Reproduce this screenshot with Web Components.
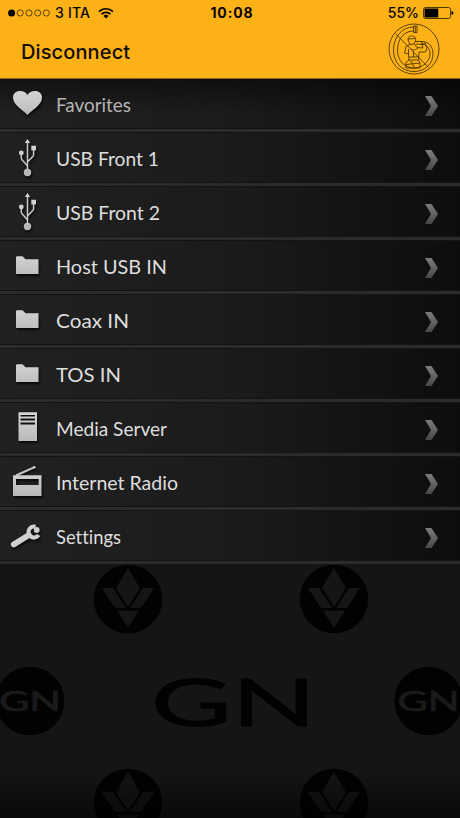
<!DOCTYPE html>
<html lang="en">
<head>
<meta charset="utf-8">
<meta name="viewport" content="width=device-width, initial-scale=1">
<title>Inputs</title>
<style>
  body {
    margin: 0;
    background: #151515;
  }
</style>
</head>
<body>
<player-screen>
  <status-bar slot="top" carrier="3 ITA" time="10:08" battery="55"></status-bar>
  <nav-bar slot="top">Disconnect</nav-bar>
  <source-row icon="heart" span="75" dim>Favorites</source-row>
  <source-row icon="usb" span="103">USB Front 1</source-row>
  <source-row icon="usb" span="104">USB Front 2</source-row>
  <source-row icon="folder" span="111">Host USB IN</source-row>
  <source-row icon="folder" span="73">Coax IN</source-row>
  <source-row icon="folder" span="65">TOS IN</source-row>
  <source-row icon="server" span="111">Media Server</source-row>
  <source-row icon="radio" span="122">Internet Radio</source-row>
  <source-row icon="wrench" span="65">Settings</source-row>
  <brand-pattern slot="bottom"></brand-pattern>
</player-screen>

<script>
// 54x51 drawings, one for each kind of source
const ICONS = {
  heart: '<path d="M27.500 37C23 32 13 27 13 19.500C13 15.500 16 13 20 13C23.500 13 26 14.500 27.500 17C29 14.500 31.500 13 35 13C39 13 42 15.500 42 19.500C42 27 32 32 27.500 37Z"/>',
  usb: `<circle cx="27.500" cy="40.500" r="3.700"/><circle cx="21.300" cy="21" r="2.400"/>
    <path d="M27.500 7L30.200 11H24.800ZM31.300 13.800H36V18.500H31.300Z"/>
    <path class="line" d="M27.500 10V38M21.300 21V26Q21.300 27 22.200 28L27.500 34M33.600 17V22.500Q33.600 23.500 32.800 24.400L27.500 30"/>`,
  folder: '<path d="M16 17.300Q16 16.300 17 16.300H22.500L25.500 19.300H38.500V34H16Z"/>',
  server: '<path fill-rule="evenodd" d="M18.500 10.300H37V39H18.500ZM20.500 13H35V14.600H20.500ZM20.500 16.600H35V18.400H20.500ZM20.500 20.600H35V22.400H20.500Z"/>',
  radio: '<path fill-rule="evenodd" d="M13 19.300H41.500V40H13ZM16 23V29H38.700V23Z"/><path class="line wide" d="M16 19.500L34 11.300"/><circle cx="34.300" cy="11.300" r="1.200"/>',
  wrench: `<path class="handle" d="M13.700 34.500L29 25"/>
    <path class="jaw" d="M35.500 16.700A5.500 5.500 0 1 0 38.600 25"/>
    <circle cx="36.700" cy="20" r="2.900"/>`
};

class PlayerScreen extends HTMLElement {
  constructor() {
    super();
    this.attachShadow({ mode: 'open' }).innerHTML = `
      <style>
        :host {
          display: flex;
          flex-direction: column;
          height: 818px;
          overflow: hidden;
          background: #151515;
        }
        header {
          height: 79px;
          box-sizing: border-box;
          background: #fcb116;
          border-bottom: 1px solid #8f6417;
        }
        main {
          display: flex;
          flex-direction: column;
          margin-top: -1px;
        }
        header { position: relative; }
      </style>
      <header><slot name="top"></slot></header>
      <main><slot></slot></main>
      <slot name="bottom"></slot>
    `;
  }
}

class StatusBar extends HTMLElement {
  connectedCallback() {
    const battery = Number(this.getAttribute('battery'));
    this.attachShadow({ mode: 'open' }).innerHTML = `
      <style>
        :host {
          display: grid;
          grid-template-columns: 1fr auto 1fr;
          align-items: center;
          height: 26px;
          padding: 0 6px 0 8px;
          color: #080500;
          font: 500 14px/26px Inter, sans-serif;
        }
        div { display: flex; align-items: center; }
        .right { justify-content: flex-end; gap: 4px; }
        .carrier { margin: 0 8px 0 5px; letter-spacing: 0.2px; }
        .time { font-weight: 700; letter-spacing: 0.9px; padding-left: 2px; }
        svg { display: block; }
      </style>
      <div>
        <svg width="42" height="8" viewBox="0 0 42 8">
          <circle cx="3.600" cy="4" r="3.500"/>
          <g fill="none" stroke="#3b2a08" stroke-width=".8">
            <circle cx="12.200" cy="4" r="3.100"/><circle cx="21" cy="4" r="3.100"/>
            <circle cx="29.700" cy="4" r="3.100"/><circle cx="38.300" cy="4" r="3.100"/>
          </g>
        </svg>
        <span class="carrier">${this.getAttribute('carrier')}</span>
        <svg width="16" height="12" viewBox="0 0 16 12" fill="none" stroke="#080500" stroke-width="1.700">
          <path d="M1 4.600A10 10 0 0 1 15 4.600M3.500 7.200A6.500 6.500 0 0 1 12.500 7.200"/>
          <path d="M5.400 9A3.800 3.800 0 0 1 10.600 9L8 11.600Z" fill="#080500" stroke="none"/>
        </svg>
      </div>
      <span class="time">${this.getAttribute('time')}</span>
      <div class="right">
        <span>${battery}%</span>
        <svg width="31" height="12" viewBox="0 0 31 12">
          <rect x=".5" y=".5" width="27" height="11" rx="2" fill="none" stroke="#3b2a08" stroke-width=".9"/>
          <rect x="1.500" y="1.500" width="${25 * battery / 100}" height="9"/>
          <path d="M28.500 4Q30.500 4.500 30.500 6T28.500 8Z"/>
        </svg>
      </div>
    `;
  }
}

class NavBar extends HTMLElement {
  constructor() {
    super();
    this.attachShadow({ mode: 'open' }).innerHTML = `
      <style>
        :host {
          display: flex;
          justify-content: space-between;
          height: 51px;
          padding: 0 19px 0 21px;
          color: #120c02;
          font: 500 20px/53px Inter, sans-serif;
          letter-spacing: 0.12px;
        }
        svg { margin-top: -3px; }
      </style>
      <span><slot></slot></span>
      <svg width="53" height="53" viewBox="0 0 53 53" fill="none" stroke="#4d3505" stroke-width=".9">
        <circle cx="26" cy="26" r="25"/>
        <!-- horn curling round the player -->
        <path d="M25.500 4C14 4 5.500 14 5.500 27C5.500 40 14 48.500 26 48.500C38 48.500 45 40 45 31C45 23 40 18 33 18.500"/>
        <path d="M25.500 8C16 8 9.500 16 9.500 27C9.500 38 17 45 26 45C35 45 42 38 42 31C42 25 38 21 33 21"/>
        <path d="M25.500 3V9.500H29V3ZM27.300 3V9.500M7.500 10.500L40.500 44.500"/>
        <!-- player -->
        <path d="M20 17C20 13.500 22 12.500 24.500 13C27.500 13.500 28 16 27.500 18L26 21L22 21.500ZM20 16L27.500 15.500M27.500 18.500L34 18.500V21.500L28 21"/>
        <path d="M22 21.500L18 23.500L16.500 30L20.500 31L21 37H30.500L31 29L37.500 29L39 25L37 20L34 21.500L35 25L29 24.500L26.500 21"/>
        <path d="M20.500 26V31M23 25.500C24.500 27.500 28 27 30 25M25.500 28V34M21 34H30.500M21 37L17.500 40L18 45H32V40L30.500 37M18 41.500L32 40M23 38L26 44"/>
      </svg>
    `;
  }
}

class SourceRow extends HTMLElement {
  connectedCallback() {
    const span = this.getAttribute('span');
    const label = this.textContent;
    this.attachShadow({ mode: 'open' }).innerHTML = `
      <style>
        :host {
          display: flex;
          align-items: center;
          box-sizing: border-box;
          height: 54px;
          border-bottom: 3px solid #2b2b2b;
          background: linear-gradient(90deg, #212121, #1b1b1b 50%, #0d0d0d);
          box-shadow: inset 0 1px #131313, inset 0 -1px #131313;
        }
        :host([dim]) {
          background: linear-gradient(#0007, #0000 70%), linear-gradient(90deg, #212121, #1b1b1b 50%, #0d0d0d);
        }
        svg { flex: none; display: block; }
        .icon {
          fill: url(#g);
          filter: drop-shadow(1px 2px 1px #000b);
        }
        .line { fill: none; stroke: #c8c8c8; stroke-width: 1.500; }
        .wide { stroke-width: 2; }
        .handle { fill: none; stroke: #d0d0d0; stroke-width: 5.600; stroke-linecap: round; }
        .jaw { fill: none; stroke: #d0d0d0; stroke-width: 4; }
        .label {
          overflow: visible;
          margin-left: 2px;
          fill: #dedede;
          font: 400 20px Lato, sans-serif;
          font-variant-ligatures: none;
        }
        :host([dim]) .label { fill: #b4b4b4; }
        .chevron { margin: 4px 21px 0 auto; }
      </style>
      <svg class="icon" width="54" height="51" viewBox="0 0 54 51">
        <defs>
          <linearGradient id="g" gradientUnits="userSpaceOnUse" x1="0" y1="12" x2="0" y2="42">
            <stop stop-color="#d6d6d6"/><stop offset="1" stop-color="#b6b6b6"/>
          </linearGradient>
        </defs>
        ${ICONS[this.getAttribute('icon')]}
      </svg>
      <svg class="label" width="${span}" height="51">
        <text x="0" y="34" textLength="${span}" lengthAdjust="spacingAndGlyphs">${label}</text>
      </svg>
      <svg class="chevron" width="14" height="20" viewBox="0 0 14 20">
        <defs>
          <linearGradient id="c" x2="0" y2="1"><stop stop-color="#7c7c7c"/><stop offset="1" stop-color="#484848"/></linearGradient>
        </defs>
        <path d="M0 0H6.500L13 10L6.500 20H0L6 10Z" fill="url(#c)"/>
      </svg>
    `;
  }
}

class BrandPattern extends HTMLElement {
  constructor() {
    super();
    // tulip badge, centred on its own origin
    const tulip = (x, y) => `
      <g transform="translate(${x} ${y})">
        <circle r="34.300" fill="#020202"/>
        <path fill="#151515" d="M0-31L12-11L0 8L-12-11ZM-26-11H-15L-2 9H-13ZM26-11H15L2 9H13ZM-11 11.500H11L0 29Z"/>
      </g>`;
    const badge = x => `
      <circle cx="${x}" cy="137" r="34.300" fill="#020202"/>
      <text x="${x - 31}" y="146.500" font-size="26" textLength="62" lengthAdjust="spacingAndGlyphs" fill="#1a1a1a" stroke="#1a1a1a" stroke-width=".7">GN</text>`;
    this.attachShadow({ mode: 'open' }).innerHTML = `
      <style>
        :host {
          display: block;
          height: 254px;
          background: #151515;
        }
        svg { display: block; }
        text { font-family: Lato, sans-serif; }
      </style>
      <svg width="460" height="254" viewBox="0 0 460 254">
        <defs>
          <linearGradient id="fade" x2="0" y2="1"><stop stop-opacity="0"/><stop offset="1" stop-opacity=".55"/></linearGradient>
        </defs>
        ${tulip(128, 35)}${tulip(334, 35)}
        ${badge(30)}${badge(428.500)}
        <text x="151" y="161.500" font-size="66" textLength="165" lengthAdjust="spacingAndGlyphs" fill="#020202" stroke="#020202">GN</text>
        ${tulip(128, 239)}${tulip(334, 239)}
        <rect y="204" width="460" height="50" fill="url(#fade)"/>
      </svg>
    `;
  }
}

customElements.define('player-screen', PlayerScreen);
customElements.define('status-bar', StatusBar);
customElements.define('nav-bar', NavBar);
customElements.define('source-row', SourceRow);
customElements.define('brand-pattern', BrandPattern);
</script>
</body>
</html>
